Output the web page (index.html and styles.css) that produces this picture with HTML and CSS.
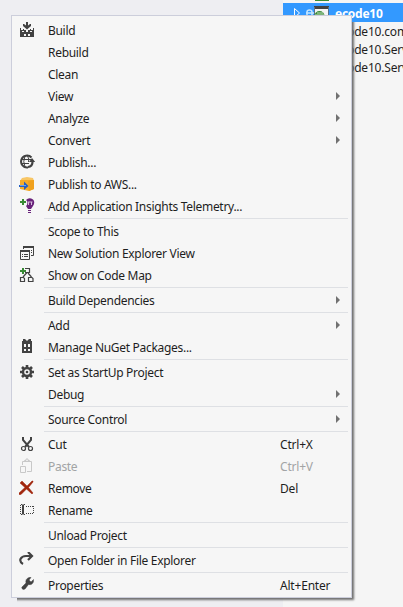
FILE: index.html
```
<!DOCTYPE html>
<html lang="en">
<head>
<meta charset="utf-8">
<title>Project menu</title>
<link rel="stylesheet" href="styles.css">
</head>
<body>
<main class="window">
  <aside class="explorer">
    <div class="above"><i></i></div>
    <div class="node selected">
      <svg class="tree-icons" width="50" height="19" viewBox="0 0 50 19"><path d="M11.500 5.500v9l5-4.500z" fill="none" stroke="#fff"/><path d="M24 12V9q0-2 2.500-2T29 9v3M23 10h8" fill="none" stroke="#c5e6ff" stroke-width="1.500"/><path d="M31 3h15v15H31z" fill="#f4f4f4"/><path d="M31 3h15v3H31z" fill="#424242"/><path d="M31.500 4v14M45.500 4v14" stroke="#55718a"/><circle cx="36.500" cy="13" r="5" fill="#388a34"/><path d="M32 12h9M34 10h6" stroke="#c5dfc1"/></svg>
      <b>ecode10</b>
    </div>
    <div class="node">ecode10.com</div>
    <div class="node">ecode10.Services</div>
    <div class="node">ecode10.Services</div>
  </aside>
  <nav class="menu">
    <div class="item"><svg class="icon" viewBox="0 0 16 16" fill="#424242"><path d="M7 0h2v3.500l2-1.500h1v2L8 7.500 4 4V2h1l2 1.500z"/><path fill-rule="evenodd" d="M1 6h1v2h2V7h1v1h2v1h2V8h2V7h1v1h2V6h1v9H1zM3 9v1h2V9zm4 0v1h2V9zm4 0v1h2V9zM5 12v2h2v-2zm4 0v2h2v-2z"/></svg><span>Build</span></div>
    <div class="item"><span>Rebuild</span></div>
    <div class="item"><span>Clean</span></div>
    <div class="item sub"><span>View</span></div>
    <div class="item sub"><span>Analyze</span></div>
    <div class="item sub"><span>Convert</span></div>
    <div class="item"><svg class="icon" viewBox="0 0 16 16" fill="none" stroke="#424242"><path d="M12.500 3.500A6 6 0 1 0 9 13.500" stroke-width="2"/><path d="M2 5.500h11M2 9.500h8M6 2Q3.500 7.500 6 13M8.500 2Q10.500 5 9.500 8"/><path d="M9 13q4.500-.5 4.500-5" stroke-width="2.200"/><path d="M10 8 13 4l3.200 4z" fill="#424242" stroke="none"/></svg><span>Publish...</span></div>
    <div class="item"><svg class="icon" viewBox="0 0 16 16"><path d="m3 2 5-1 6 1 1 3H1z" fill="#f8c665"/><path d="M1 4h14v9l-5 2-9-2z" fill="#f5ac29"/><path d="m9 5 6-1v9l-5 2z" fill="#f0a11d"/><path d="M0 9h5V5.500l4.500 4.500L5 14v-3H0z" fill="#245fc3"/><path d="M1 9.500h6" stroke="#6aa2ee"/></svg><span>Publish to AWS...</span></div>
    <div class="item"><svg class="icon" viewBox="0 0 16 16"><path d="M1 4h6M4 1v6" stroke="#388a34" stroke-width="2"/><path d="M7 2q3-3 7-.5Q16.500 4 14 8l-2 3H9L7 8q2-1 1-5z" fill="#68217a"/><path d="M8.500 4h5M9.500 4v3m3-3v3" stroke="#d5bcdb" fill="none"/><path d="M9 12.500h3M9 14.500h3" stroke="#68217a" stroke-width="1.200"/></svg><span>Add Application Insights Telemetry...</span></div>
    <hr>
    <div class="item"><span>Scope to This</span></div>
    <div class="item"><svg class="icon" viewBox="0 0 16 16" fill="none" stroke="#424242"><path d="M4.500 4V1.500h10v9H12"/><path d="M4 2h11" stroke-width="2"/><path d="M1.500 5.500h9v9h-9z"/><path d="M1 6h10" stroke-width="2"/><path d="M3 9.500h1m1 0h4M3 11.500h1m1 0h4M12 5.500h1M12 7.500h1"/></svg><span>New Solution Explorer View</span></div>
    <div class="item"><svg class="icon" viewBox="0 0 16 16" fill="none" stroke="#424242" stroke-width="1.200"><path d="M6 1.500h4.500v4H6M8 5.500 4 10M9 6l3.500 4"/><path d="M1.500 10.500h3l1 1v3h-4zM9.500 10.500h3.500l1 1v3H9.500z"/><path d="M1 4h6M4 1v6" stroke="#388a34" stroke-width="2"/></svg><span>Show on Code Map</span></div>
    <hr>
    <div class="item sub"><span>Build Dependencies</span></div>
    <hr>
    <div class="item sub"><span>Add</span></div>
    <div class="item"><svg class="icon" viewBox="0 0 16 16" fill="#424242"><path fill-rule="evenodd" d="M4 0h2l2 2 2-2h2v2h1v12H3V2h1zM5 5v3h2V5zm4 0v3h2V5zm-4 5v2h2v-2zm4 0v2h2v-2z"/></svg><span>Manage NuGet Packages...</span></div>
    <hr>
    <div class="item"><svg class="icon" viewBox="0 0 16 16"><g stroke="#424242" stroke-width="2.600"><path d="M8 1v14M1 8h14M3 3l10 10M13 3 3 13"/></g><circle cx="8" cy="8" r="4" fill="#f6f6f6" stroke="#424242" stroke-width="2.400"/><circle cx="8" cy="8" r="1.300" fill="#424242"/></svg><span>Set as StartUp Project</span></div>
    <div class="item sub"><span>Debug</span></div>
    <hr>
    <div class="item sub"><span>Source Control</span></div>
    <hr>
    <div class="item"><svg class="icon" viewBox="0 0 16 16" fill="none" stroke="#424242"><path d="M4 1v3l6 7M12 1v3l-6 7" stroke-width="2"/><circle cx="4.500" cy="12.500" r="2" stroke-width="1.200"/><circle cx="11.500" cy="12.500" r="2" stroke-width="1.200"/></svg><span>Cut</span><kbd>Ctrl+X</kbd></div>
    <div class="item disabled"><svg class="icon" viewBox="0 0 16 16" fill="none" stroke="#c8c8c8"><path d="M3.500 7V3.500h9v10H8M5.500 3.500v-1H7V1h2v1.500h1.500v1M1.500 8.500h5v6h-5z"/></svg><span>Paste</span><kbd>Ctrl+V</kbd></div>
    <div class="item"><svg class="icon" viewBox="0 0 16 16"><path d="m1 3 2-2 5 5 5-5h1v1L9.500 7.500 14 13l-1 1-5.500-5L2 14.500H0V13l6-5.500z" fill="#a1260d" stroke="#a1260d" stroke-width=".5"/></svg><span>Remove</span><kbd>Del</kbd></div>
    <div class="item"><svg class="icon" viewBox="0 0 16 16" fill="none" stroke="#424242"><path d="M4 3v9" stroke-width="2"/><path d="M2 2.500h1.500m1 0H6M2 12.500h1.500m1 0H6"/><path d="M1.500 3v10" stroke-dasharray="1 1"/><path d="M7 4.500h8M7 11.500h8M14.500 4v8" stroke-dasharray="1 1"/></svg><span>Rename</span></div>
    <hr>
    <div class="item"><span>Unload Project</span></div>
    <hr>
    <div class="item"><svg class="icon" viewBox="0 0 16 16" fill="none" stroke="#424242"><path d="M4 12Q.5 10 1.500 7 3 4 7 4h5" stroke-width="2.200"/><path d="m9 0 4 4-4 4" stroke-width="2.200"/></svg><span>Open Folder in File Explorer</span></div>
    <hr>
    <div class="item"><svg class="icon" viewBox="0 0 16 16"><path d="m3 10 4-4q-1-4 3-5.500 1-.5 2 0L10 3l2 2 2.500-2.500q.5 3-1.500 4.500-1.500 1-3.500.5L6 12q-2 1-3-.5-.5-.7 0-1.500z" fill="#424242" stroke="#424242" stroke-width=".5"/></svg><span>Properties</span><kbd>Alt+Enter</kbd></div>
  </nav>
</main>
</body>
</html>
```
FILE: styles.css
```
* { box-sizing: border-box; }
body { margin: 0; background: #eeeef2; color: #1e1e1e; font: 12px/18px "Noto Sans", "Open Sans", sans-serif; letter-spacing: -.3px; }
.window { position: relative; width: 403px; height: 607px; overflow: hidden; }
.explorer { width: 120px; height: 607px; margin-left: 283px; overflow: hidden; background: #f5f5f5; }
.above { height: 3px; padding-left: 32px; }
.above i { display: block; width: 14px; height: 1px; background: #388a34; }
.node { height: 18px; padding-left: 52px; line-height: 20px; letter-spacing: -.2px; white-space: nowrap; }
.selected { display: flex; height: 19px; padding: 1px 0 0; background: #39f; color: #fff; letter-spacing: -.25px; }
.tree-icons { flex: none; margin: -1px 2px 0 0; }
.menu { position: absolute; left: 11px; top: 15px; width: 341px; height: 583px; padding: 3px 3px 1px 0; border: 1px solid #cccedb; background: #f6f6f6; box-shadow: 2px 2px 2px #707070; clip-path: polygon(0 0, 341px 0, 341px 7px, 347px 7px, 347px 589px, 6px 589px, 6px 583px, 0 583px); }
.item { position: relative; display: grid; grid-template-columns: 28px 232px 1fr; align-items: center; height: 22px; padding-left: 8px; line-height: 22px; white-space: nowrap; }
.item span { grid-column: 2; padding-top: 1px; margin-bottom: -1px; }
.item kbd { grid-column: 3; padding-top: 1px; margin-bottom: -1px; font: inherit; letter-spacing: -.2px; }
.icon { grid-column: 1; grid-row: 1; width: 16px; height: 16px; margin-left: -1px; margin-top: 0; }
.sub::after { content: ""; position: absolute; right: 8px; top: 7px; border: solid transparent; border-width: 4px 0 4px 4px; border-left-color: #717171; }
.disabled { color: #a2a4a5; }
hr { height: 1px; margin: 1px 0 1px 32px; border: 0; background: #dee0e4; }
```
